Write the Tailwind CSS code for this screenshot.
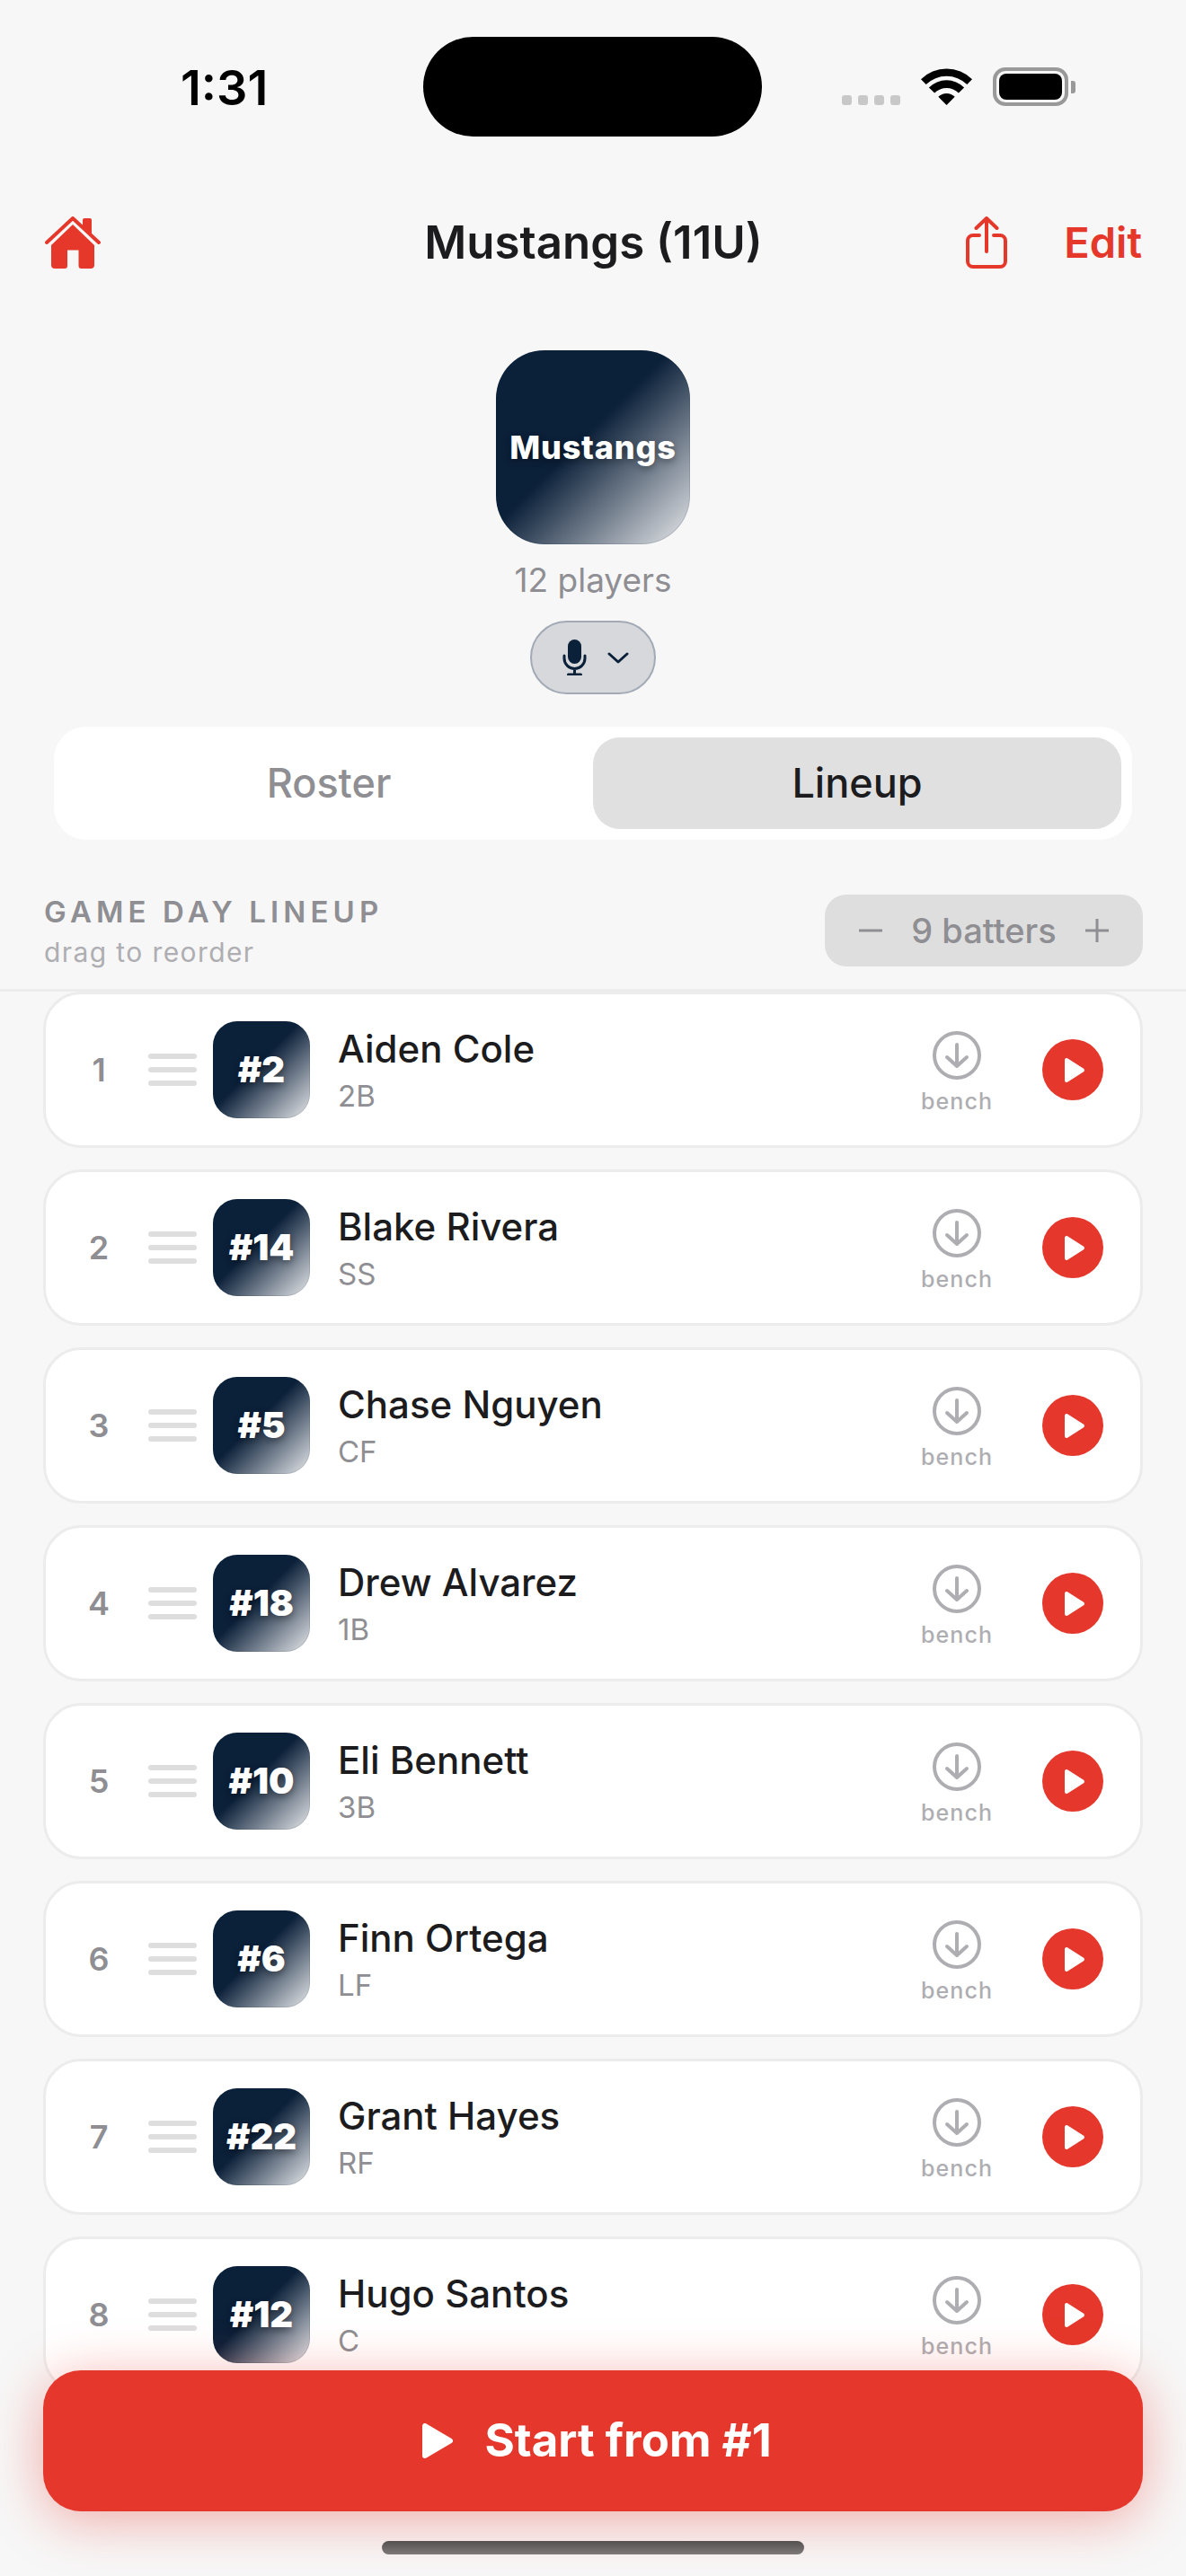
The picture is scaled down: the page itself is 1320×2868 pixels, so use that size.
<!DOCTYPE html>
<html lang="en">
<head>
  <meta charset="UTF-8" />
  <meta name="viewport" content="width=device-width, initial-scale=1.0" />
  <title>Mustangs (11U)</title>
  <script src="https://cdn.jsdelivr.net/npm/@tailwindcss/browser@4"></script>
</head>
<body class="relative w-[1320px] h-[2868px] overflow-hidden bg-[#f7f7f7] font-[Inter,sans-serif] text-[#1c1c1e]">
  <!-- Status bar -->
  <div class="flex h-[152px] pt-[41px]">
    <div class="w-[471px] pt-[27px] pl-[201px] text-[54px] leading-[60px] font-semibold text-black">1:31</div>
    <div class="w-[377px] h-[111px] rounded-full bg-black"></div>
    <div class="flex items-start pt-[34px] pl-[89px]">
      <div class="flex gap-[7px] mt-[31px]">
        <span class="w-[11px] h-[11px] rounded-[3px] bg-[#c8c8c8]"></span>
        <span class="w-[11px] h-[11px] rounded-[3px] bg-[#c8c8c8]"></span>
        <span class="w-[11px] h-[11px] rounded-[3px] bg-[#c8c8c8]"></span>
        <span class="w-[11px] h-[11px] rounded-[3px] bg-[#c8c8c8]"></span>
      </div>
      <svg class="ml-[23px] overflow-visible" width="57" height="42" viewBox="0 0 57 42" fill="#000">
        <path d="M0 13.2A40.5 40.5 0 0 1 57 13.2L51.3 18.9A33 33 0 0 0 5.7 18.9Z" />
        <path d="M8.9 22.4A27.7 27.7 0 0 1 48.1 22.4L41.9 28.6A19 19 0 0 0 15.1 28.6Z" />
        <path d="M19.3 32.8A13 13 0 0 1 37.7 32.8L28.5 42Z" />
      </svg>
      <div class="flex items-center ml-[23px]">
        <div class="w-[84px] h-[43px] rounded-[14px] border-[4px] border-[#999999] p-[3px]">
          <div class="w-full h-full rounded-[8px] bg-black"></div>
        </div>
        <div class="ml-[3px] w-[5px] h-[14px] rounded-r-[3px] bg-[#999999]"></div>
      </div>
    </div>
  </div>

  <!-- Nav -->
  <header class="grid grid-cols-[1fr_auto_1fr] items-center h-[58px] mt-[89px] pl-[50px] pr-[49px]">
    <svg width="62" height="58" viewBox="0 0 62 58">
      <path d="M42 12V4a2 2 0 0 1 2-2h6a2 2 0 0 1 2 2v18z" fill="#e6372b" />
      <path d="M2 29 31 2l29 27" fill="none" stroke="#e6372b" stroke-width="4" stroke-linecap="round" stroke-linejoin="round" />
      <path d="M31 9 55 32V54a4 4 0 0 1-4 4H40.500a3 3 0 0 1-3-3V37.500H25V55a3 3 0 0 1-3 3H11a4 4 0 0 1-4-4V32Z" fill="#e6372b" />
    </svg>
    <h1 class="text-[51px] leading-[58px] font-semibold text-[#1c1c1e]">Mustangs (11U)</h1>
    <div class="flex items-center justify-end">
      <svg width="46" height="58" viewBox="0 0 46 58" fill="none" stroke="#e6372b" stroke-width="4" stroke-linecap="round" stroke-linejoin="round">
        <path d="M15 21H8a6 6 0 0 0-6 6V50a6 6 0 0 0 6 6H38a6 6 0 0 0 6-6V27a6 6 0 0 0-6-6H31" />
        <path d="M23 39V2M11.500 13 23 2l11.500 11" />
      </svg>
      <span class="ml-[63px] text-[47px] leading-[58px] font-semibold text-[#e6372b]">Edit</span>
    </div>
  </header>

  <!-- Team -->
  <section class="flex flex-col items-center mt-[91px]">
    <div class="flex items-center justify-center w-[216px] h-[216px] rounded-[54px] shadow-[inset_0_0_0_1px_rgba(11,32,57,0.12)] bg-[linear-gradient(135deg,#0b2039_0%,#0b2039_45%,#e8e9ec_100%)]">
      <span class="text-[36px] leading-[44px] font-extrabold tracking-[0.8px] text-white [text-shadow:0_3px_9px_rgba(0,0,0,0.4)]">Mustangs</span>
    </div>
    <p class="mt-[17px] text-[37px] leading-[46px] text-[#8e8e93]">12 players</p>
    <button class="flex items-center justify-center gap-[22px] mt-[22px] w-[140px] h-[82px] pl-[5px] rounded-full border-2 border-[#a3aab5] bg-[#d6d8dc]">
      <svg width="28" height="40" viewBox="0 0 28 40" fill="none" stroke="#0b2039" stroke-width="3" stroke-linecap="round">
        <rect x="6" y="0" width="15" height="27" rx="7.500" fill="#0b2039" stroke="none" />
        <path d="M2 18v3a11.500 11.500 0 0 0 23 0v-3M13.500 33v6M6.500 39h14" />
      </svg>
      <svg width="24" height="13" viewBox="0 0 24 13" fill="none" stroke="#0b2039" stroke-width="3" stroke-linecap="round" stroke-linejoin="round">
        <path d="M2 2l10 9 10-9" />
      </svg>
    </button>
  </section>

  <!-- Tabs -->
  <div class="flex mx-[60px] mt-[36px] h-[126px] p-[12px] rounded-[36px] bg-white">
    <button class="flex-1 rounded-[30px] text-[45px] font-medium text-[#8e8e93]">Roster</button>
    <button class="flex-1 rounded-[30px] bg-[#e0e0e0] text-[45px] font-medium text-[#1c1c1e]">Lineup</button>
  </div>

  <!-- Lineup header -->
  <div class="flex items-start justify-between mt-[61px] pl-[49px] pr-[48px] pb-[25px] border-b-[3px] border-[#ececec]">
    <div class="h-[80px] pt-[1px]">
      <h2 class="text-[33px] leading-[36px] font-semibold tracking-[5.100px] text-[#8e8e93]">GAME DAY LINEUP</h2>
      <p class="mt-[9px] text-[30px] leading-[36px] tracking-[1.400px] text-[#aeaeb2]">drag to reorder</p>
    </div>
    <div class="flex items-center w-[354px] h-[80px] pl-[38px] pr-[38px] justify-between rounded-[24px] bg-[#dedede] text-[38px] font-medium text-[#8e8e93]">
      <svg width="26" height="26" viewBox="0 0 26 26" stroke="#8e8e93" stroke-width="3"><path d="M0 13h26" /></svg>
      <span>9 batters</span>
      <svg width="26" height="26" viewBox="0 0 26 26" stroke="#8e8e93" stroke-width="3"><path d="M0 13h26M13 0v26" /></svg>
    </div>
  </div>

  <!-- Batting order -->
  <main id="lineup" class="flex flex-col gap-[24px] px-[48px]"></main>

  <!-- Start button, over the list -->
  <div class="absolute inset-x-0 bottom-0 h-[268px] bg-[linear-gradient(to_bottom,transparent_50px,#f7f7f7_90px)]">
    <button class="flex items-center justify-center gap-[35px] absolute left-[48px] top-[39px] w-[1224px] h-[157px] pl-[9px] rounded-[42px] bg-[#e5372b] shadow-[0_9px_60px_rgba(229,55,43,0.4)] text-[51px] font-bold text-white">
      <svg width="34" height="39" viewBox="0 0 34 39" fill="#fff" stroke="#fff" stroke-width="6" stroke-linejoin="round">
        <path d="M3 3v33l28-16.500z" />
      </svg>
      <span>Start from #1</span>
    </button>
    <div class="absolute left-[425px] top-[229px] w-[470px] h-[15px] rounded-full bg-[linear-gradient(to_bottom,#555050,#7f7a7a)]"></div>
  </div>

  <script>
    const players = [
      { name: 'Aiden Cole', pos: '2B', num: 2 },
      { name: 'Blake Rivera', pos: 'SS', num: 14 },
      { name: 'Chase Nguyen', pos: 'CF', num: 5 },
      { name: 'Drew Alvarez', pos: '1B', num: 18 },
      { name: 'Eli Bennett', pos: '3B', num: 10 },
      { name: 'Finn Ortega', pos: 'LF', num: 6 },
      { name: 'Grant Hayes', pos: 'RF', num: 22 },
      { name: 'Hugo Santos', pos: 'C', num: 12 }
    ];

    const lineup = document.getElementById('lineup');

    // One card per batter
    players.forEach((p, i) => {
      const row = document.createElement('div');
      row.className = 'flex items-center shrink-0 h-[174px] rounded-[42px] border-[3px] border-[#ececec] bg-white';
      row.innerHTML = `
        <span class="ml-[41px] w-[36px] text-center text-[36px] font-semibold text-[#8e8e93]">${i + 1}</span>
        <div class="flex flex-col gap-[9px] ml-[37px] w-[54px]">
          <span class="h-[6px] rounded-full bg-[#dedede]"></span>
          <span class="h-[6px] rounded-full bg-[#dedede]"></span>
          <span class="h-[6px] rounded-full bg-[#dedede]"></span>
        </div>
        <div class="flex items-center justify-center ml-[18px] w-[108px] h-[108px] rounded-[27px] shadow-[inset_0_0_0_1px_rgba(11,32,57,0.12)] bg-[linear-gradient(135deg,#0b2039_0%,#0b2039_45%,#e8e9ec_100%)]">
          <span class="text-[40px] font-black text-white [text-shadow:0_3px_9px_rgba(0,0,0,0.4)]">#${p.num}</span>
        </div>
        <div class="flex-1 ml-[31px]">
          <div class="text-[42px] leading-[50px] font-[550] text-[#1c1c1e]">${p.name}</div>
          <div class="mt-[7px] text-[33px] leading-[40px] text-[#8e8e93]">${p.pos}</div>
        </div>
        <div class="flex flex-col items-center w-[80px] pt-[4px]">
          <svg width="54" height="54" viewBox="0 0 54 54" fill="none" stroke="#aeaeb2" stroke-width="4" stroke-linecap="round" stroke-linejoin="round">
            <circle cx="27" cy="27" r="25" />
            <path d="M27 15v24M16 29l11 10 11-10" />
          </svg>
          <span class="mt-[12px] text-[25px] leading-[24px] font-medium tracking-[1.100px] text-[#aeaeb2]">bench</span>
        </div>
        <div class="flex items-center justify-center ml-[55px] mr-[41px] w-[68px] h-[68px] rounded-full bg-[#e5372b]">
          <svg width="68" height="68" viewBox="0 0 68 68" fill="#fff" stroke="#fff" stroke-width="4" stroke-linejoin="round">
            <path d="M27 23v23l18-11.500z" />
          </svg>
        </div>
      `;
      lineup.appendChild(row);
    });
  </script>
</body>
</html>
